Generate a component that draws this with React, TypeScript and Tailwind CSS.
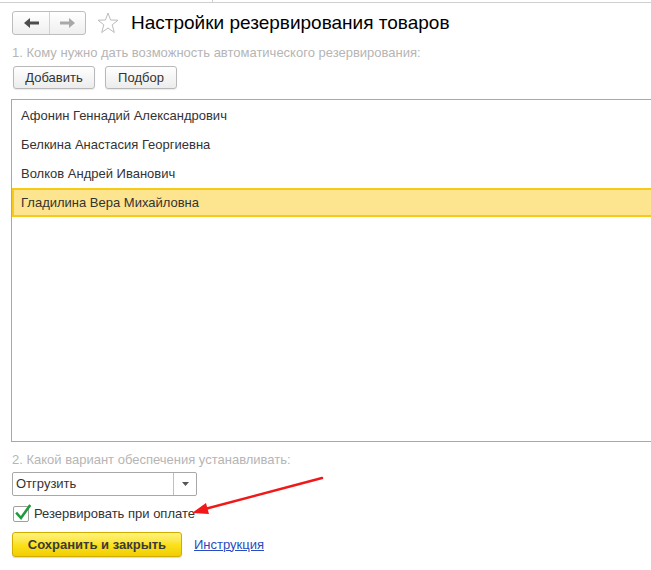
import React from "react";

function Arrow({ dir, color }: { dir: "left" | "right"; color: string }) {
  return (
    <svg width="15" height="10" viewBox="0 0 15 10" style={{ transform: dir === "right" ? "scaleX(-1)" : undefined }}>
      <polygon points="0,5 6,0 6,3.5 15,3.5 15,6.5 6,6.5 6,10" fill={color} />
    </svg>
  );
}

function Btn({ children, w }: { children: React.ReactNode; w: string }) {
  return (
    <div className={`${w} h-[23px] flex items-center justify-center border border-[#b8b8b8] rounded-[3px] bg-gradient-to-b from-white to-[#ececec] text-[13px] text-[#333] shadow-[0_1px_1px_rgba(0,0,0,0.08)]`}>
      {children}
    </div>
  );
}

const rows = [
  "Афонин Геннадий Александрович",
  "Белкина Анастасия Георгиевна",
  "Волков Андрей Иванович",
  "Гладилина Вера Михайловна",
];

export default function App() {
  return (
    <div
      className="relative w-[651px] h-[570px] bg-white overflow-hidden"
      style={{ fontFamily: '"Liberation Sans", Arial, sans-serif' }}
    >
      <div className="h-[3px] border-b border-[#cfcfcf] flex">
        <div className="w-[213px] border-r border-[#cfcfcf]" />
      </div>

      <div className="mt-[8px] pl-[12px] flex items-center h-[24px]">
        <div className="flex w-[74px] h-[24px] border border-[#bdbdbd] rounded-[3px] bg-gradient-to-b from-white to-[#efefef]">
          <div className="w-[37px] flex items-center justify-center border-r border-[#d2d2d2]">
            <Arrow dir="left" color="#4d4d4d" />
          </div>
          <div className="flex-1 flex items-center justify-center">
            <Arrow dir="right" color="#a8a8a8" />
          </div>
        </div>
        <svg className="ml-[11px]" width="22" height="22" viewBox="0 0 22 22">
          <polygon
            points="11,1 13.6,8 21,8.2 15.2,12.8 17.3,20.5 11,16 4.7,20.5 6.8,12.8 1,8.2 8.4,8"
            fill="none"
            stroke="#bcbcbc"
            strokeWidth="1"
            strokeLinejoin="miter"
          />
        </svg>
        <div className="ml-[12px] text-[19px] leading-[24px] text-black">Настройки резервирования товаров</div>
      </div>

      <div className="mt-[10px] pl-[12px] text-[13px] leading-[16px] text-[#b5b5b5]">
        1. Кому нужно дать возможность автоматического резервирования:
      </div>

      <div className="mt-[5px] pl-[13px] flex gap-[10px]">
        <Btn w="w-[82px]">Добавить</Btn>
        <Btn w="w-[72px]">Подбор</Btn>
      </div>

      <div className="mt-[10px] ml-[11px] w-[660px] h-[343px] border border-[#a8a8a8] pt-[1px]">
        {rows.map((r, i) =>
          i === 3 ? (
            <div
              key={r}
              className="h-[29px] flex items-center pl-[7px] bg-[#fde48f] border-2 border-[#f7ca18] text-[13px] text-[#333]"
            >
              {r}
            </div>
          ) : (
            <div key={r} className="h-[29px] flex items-center pl-[9px] text-[13px] text-[#333]">
              {r}
            </div>
          )
        )}
      </div>

      <div className="mt-[10px] pl-[12px] text-[13px] leading-[16px] text-[#b5b5b5]">
        2. Какой вариант обеспечения устанавливать:
      </div>

      <div className="mt-[4px] ml-[12px] w-[185px] h-[24px] flex border border-[#a8a8a8] rounded-[2px]">
        <div className="flex-1 flex items-center pl-[3px] text-[13px] text-[#333]">Отгрузить</div>
        <div className="w-[23px] border-l border-[#c0c0c0] flex items-center justify-center">
          <svg width="7" height="4" viewBox="0 0 7 4">
            <polygon points="0,0 7,0 3.5,4" fill="#555" />
          </svg>
        </div>
      </div>

      <div className="mt-[10px] ml-[13px] flex items-center h-[16px]">
        <div className="relative w-[16px] h-[16px] border border-[#a0a0a0] rounded-[2px] bg-white">
          <svg className="absolute left-[1px] top-[-3px]" width="16" height="17" viewBox="0 0 16 17">
            <path d="M2 9.5 L6 14 L14.5 2" fill="none" stroke="#1f9a3e" strokeWidth="2.6" strokeLinecap="square" />
          </svg>
        </div>
        <div className="ml-[5px] text-[13px] text-[#333]">Резервировать при оплате</div>
      </div>

      <div className="mt-[10px] ml-[12px] flex items-center">
        <div className="w-[170px] h-[25px] flex items-center justify-center rounded-[3px] border border-[#cfae00] bg-gradient-to-b from-[#fff27a] via-[#fbe21c] to-[#f1cd00] text-[13px] font-bold text-[#3a3a3a] shadow-[0_1px_1px_rgba(0,0,0,0.15)]">
          Сохранить и закрыть
        </div>
        <a className="ml-[12px] text-[13px] text-[#2a4cc0] underline">Инструкция</a>
      </div>

      <svg className="absolute left-0 top-0 pointer-events-none" width="651" height="570">
        <line x1="322" y1="478" x2="205" y2="509" stroke="#f01818" strokeWidth="2.5" strokeLinecap="round" />
        <polygon points="192,513 206,503 209,514" fill="#f01818" />
      </svg>
    </div>
  );
}
